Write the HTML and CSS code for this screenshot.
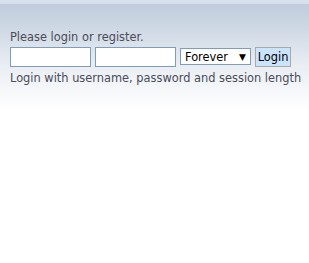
FILE: index.html
```html
<!DOCTYPE html>
<html>
<head>
<meta charset="utf-8">
<link rel="stylesheet" href="styles.css">
</head>
<body>
<div class="topstrip"></div>
<div class="panel">
  <form class="login">
    <div class="intro">Please login or register.</div>
    <div class="row">
      <input class="field" type="text">
      <input class="field" type="password">
      <div class="select"><span>Forever</span><span class="arrow">▼</span></div>
      <button class="btn" type="button">Login</button>
    </div>
    <div class="hint">Login with username, password and session length</div>
  </form>
</div>
</body>
</html>
```
FILE: styles.css
```css
html, body {
  margin: 0;
  padding: 0;
  background: #fff;
}
body {
  font-family: "DejaVu Sans", Verdana, sans-serif;
  font-size: 11.4px;
  color: #4b4b5a;
}
.topstrip {
  height: 4px;
  background: #d6e1eb;
}
.panel {
  background: linear-gradient(#c0ccdc 0px, #d2dbe6 30px, #e9eef3 62px, #fff 106px);
  height: 110px;
  padding: 0 10px;
}
.login {
  padding-top: 25px;
}
.intro {
  line-height: 16px;
  height: 18px;
  white-space: nowrap;
}
.row {
  display: flex;
  align-items: flex-start;
  gap: 4px;
}
.field {
  box-sizing: border-box;
  width: 81px;
  height: 20px;
  margin: 0;
  border: 1px solid #7f9db9;
  background: #fff;
  padding: 0 2px;
}
.select {
  box-sizing: border-box;
  width: 71px;
  height: 17px;
  margin-top: 1px;
  border: 1px solid #7f9db9;
  background: #fff;
  color: #000;
  display: flex;
  align-items: center;
  justify-content: space-between;
  padding: 0 4px 0 4px;
  font-size: 11.4px;
  font-family: "DejaVu Sans", Verdana, sans-serif;
}
.arrow {
  font-size: 9px;
}
.btn {
  box-sizing: border-box;
  height: 20px;
  width: 36px;
  margin: 0;
  padding: 0;
  border: 1px solid #a9a9a9;
  background: #cbe3fb;
  color: #000;
  font-family: "DejaVu Sans", Verdana, sans-serif;
  font-size: 11.4px;
}
.hint {
  margin-top: 3px;
  line-height: 16px;
  white-space: nowrap;
}
```
